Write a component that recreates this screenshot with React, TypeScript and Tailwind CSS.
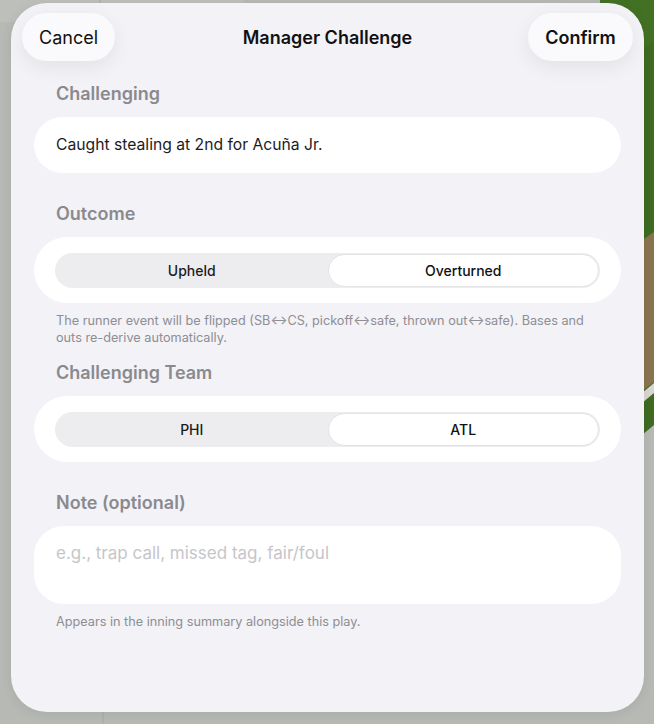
import { useState } from 'react';

// Manager challenge sheet, shown over the field view.

const OUTCOMES = ['Upheld', 'Overturned'];
const TEAMS = ['PHI', 'ATL'];

function Segmented({ options, value, onChange }: { options: string[]; value: string; onChange: (v: string) => void }) {
  return (
    <div className="flex h-[35px] rounded-full bg-[#ededef] p-[1px]">
      {options.map((o) => (
        <button
          key={o}
          type="button"
          onClick={() => onChange(o)}
          className={
            o === value
              ? 'flex-1 rounded-full border border-[#e3e3e6] bg-white text-[14px] font-medium text-[#111]'
              : 'flex-1 rounded-full border border-transparent text-[14px] font-medium text-[#1c1c1e]'
          }
        >
          {o}
        </button>
      ))}
    </div>
  );
}

function Backdrop() {
  return (
    <svg className="absolute inset-0 h-full w-full" viewBox="0 0 654 724" preserveAspectRatio="none" aria-hidden>
      <rect width="654" height="724" fill="#b7b9b5" />
      <rect width="244" height="22" fill="#bdbfbb" />
      <line x1="100" y1="0" x2="100" y2="22" stroke="#a8aaa6" strokeWidth="1" />
      <line x1="103" y1="700" x2="103" y2="724" stroke="#a8aaa6" strokeWidth="1" />
      <polygon points="244,0 654,0 654,425 600,470 600,0" fill="#3f6b22" />
      <polygon points="600,0 654,0 654,40 600,90" fill="#467527" opacity="0.6" />
      <polygon points="628,250 654,232 654,382 628,402" fill="#8a7450" />
      <polygon points="636,398 654,383 654,393 636,408" fill="#d9d8d0" />
    </svg>
  );
}

export default function App() {
  const [outcome, setOutcome] = useState('Overturned');
  const [team, setTeam] = useState('ATL');
  const [note, setNote] = useState('');

  return (
    <div className="relative h-[724px] w-[654px] overflow-hidden font-[Inter,'Noto_Sans',sans-serif] antialiased">
      <Backdrop />

      <div className="absolute left-[11px] top-[3px] flex h-[709px] w-[633px] flex-col rounded-[36px] bg-[#f2f2f7] px-[11px] pt-[10px] shadow-[0_2px_12px_rgba(0,0,0,0.08)]">
        <div className="grid grid-cols-[1fr_auto_1fr] items-center">
          <button
            type="button"
            className="h-[48px] w-[93px] justify-self-start rounded-full bg-[#fafafc] text-[18px] text-[#111] shadow-[0_6px_20px_rgba(0,0,0,0.07)]"
          >
            Cancel
          </button>
          <h1 className="text-[18px] font-semibold text-[#111]">Manager Challenge</h1>
          <button
            type="button"
            className="h-[48px] w-[105px] justify-self-end rounded-full bg-[#fafafc] text-[18px] font-semibold text-[#111] shadow-[0_6px_20px_rgba(0,0,0,0.07)]"
          >
            Confirm
          </button>
        </div>

        <div className="flex flex-col px-[12px]">
          <p className="mt-[21px] px-[22px] text-[18px] leading-[24px] font-semibold text-[#8a8a8e]">Challenging</p>
          <div className="mt-[11px] flex h-[56px] items-center rounded-full bg-white px-[22px] text-[15.7px] text-[#1c1c1e]">
            Caught stealing at 2nd for Acuña Jr.
          </div>

          <p className="mt-[29px] px-[22px] text-[18px] leading-[24px] font-semibold text-[#8a8a8e]">Outcome</p>
          <div className="mt-[11px] h-[66px] rounded-[33px] bg-white px-[21px] pt-[16px]">
            <Segmented options={OUTCOMES} value={outcome} onChange={setOutcome} />
          </div>
          <p className="mt-[9px] px-[22px] text-[12.7px] leading-[17px] text-[#8e8e93]">
            The runner event will be flipped (SB↔CS, pickoff↔safe, thrown out↔safe). Bases and outs re-derive automatically.
          </p>

          <p className="mt-[15px] px-[22px] text-[18px] leading-[24px] font-semibold text-[#8a8a8e]">Challenging Team</p>
          <div className="mt-[11px] h-[66px] rounded-[33px] bg-white px-[21px] pt-[16px]">
            <Segmented options={TEAMS} value={team} onChange={setTeam} />
          </div>

          <p className="mt-[29px] px-[22px] text-[18px] leading-[24px] font-semibold text-[#8a8a8e]">Note (optional)</p>
          <textarea
            value={note}
            onChange={(e) => setNote(e.target.value)}
            placeholder="e.g., trap call, missed tag, fair/foul"
            className="mt-[11px] h-[78px] resize-none rounded-[30px] bg-white px-[22px] pt-[16px] text-[17px] leading-[22px] text-[#1c1c1e] outline-none placeholder:text-[#c6c6ca]"
          />
          <p className="mt-[9px] px-[22px] text-[12.7px] leading-[17px] text-[#8e8e93]">
            Appears in the inning summary alongside this play.
          </p>
        </div>
      </div>
    </div>
  );
}
